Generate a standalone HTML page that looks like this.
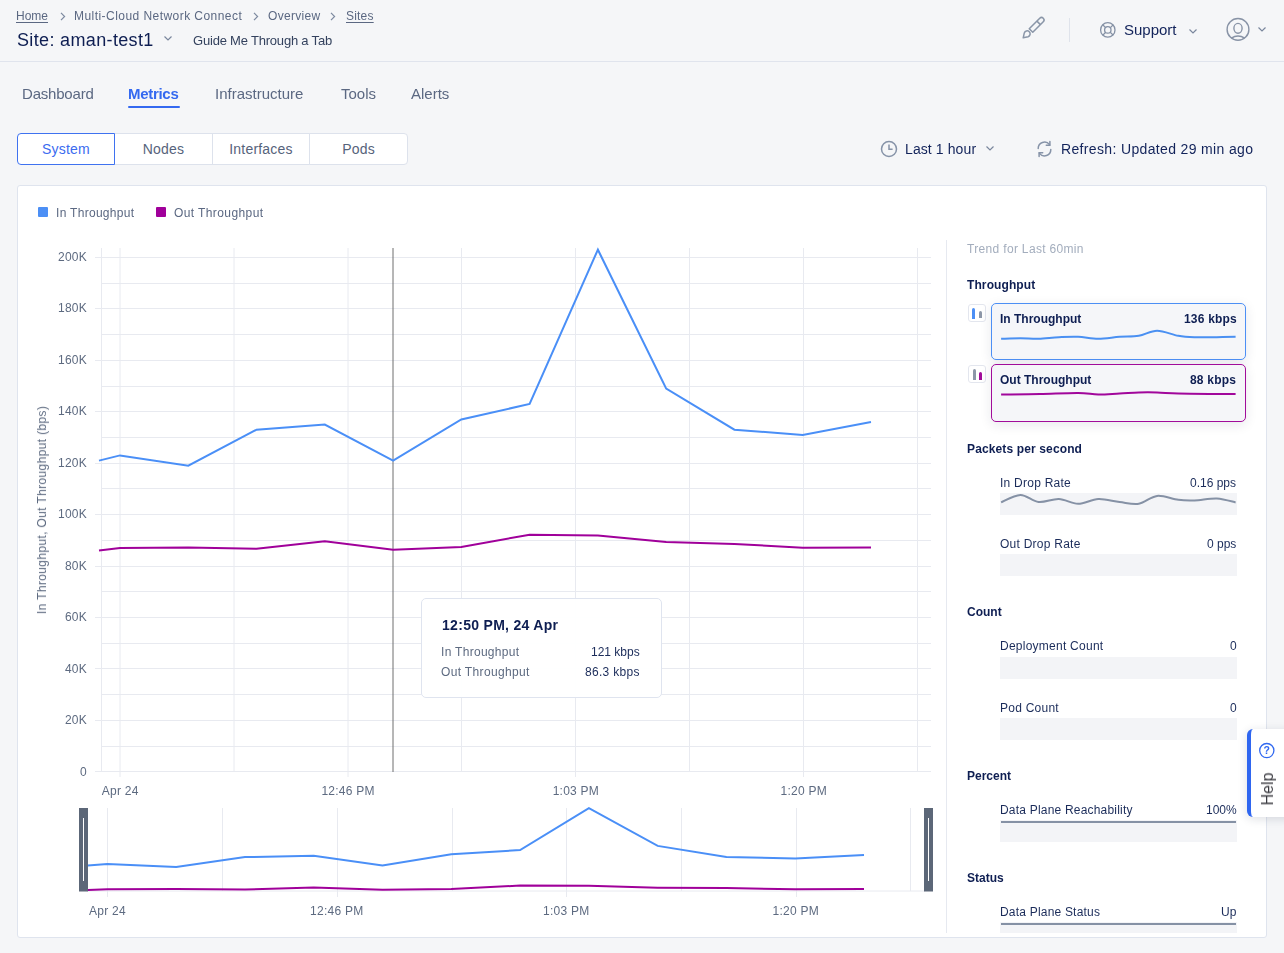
<!DOCTYPE html>
<html><head><meta charset="utf-8">
<style>
*{box-sizing:border-box;margin:0;padding:0}
html,body{width:1284px;height:953px;overflow:hidden;background:#f5f6f8;font-family:"Liberation Sans",sans-serif;color:#0e1e52}
.a{position:absolute;white-space:nowrap;will-change:transform}
.t12{font-size:12px;line-height:12px}
.t13{font-size:13px;line-height:13px}
.t14{font-size:14px;line-height:14px}
.t15{font-size:15px;line-height:15px}
.t18{font-size:18px;line-height:18px}
.bc{color:#5b6882}
.hdr{position:absolute;left:0;top:0;width:1284px;height:62px;border-bottom:1px solid #e0e4ed;background:#f5f6f8}
.tab{color:#5b6882}
.seg{position:absolute;top:133px;height:32px;background:#fff;border:1px solid #dde2ec;font-size:14px;line-height:30px;text-align:center;color:#56637b;letter-spacing:0.2px}
.card{position:absolute;left:17px;top:185px;width:1250px;height:753px;background:#fff;border:1px solid #dfe4ee;border-radius:3px}
</style></head>
<body>
<div class="hdr"></div>
<!-- breadcrumb -->
<div class="a t12 bc" style="left:16.4px;top:9.8px;text-decoration:underline;text-underline-offset:2px">Home</div>
<svg class="a" style="left:59px;top:11.5px" width="8" height="9" viewBox="0 0 8 9"><path d="M2 0.8 L5.6 4.5 L2 8.2" fill="none" stroke="#7d8aa0" stroke-width="1.2"/></svg>
<div class="a t12 bc" style="left:74.3px;top:9.8px;letter-spacing:0.45px">Multi-Cloud Network Connect</div>
<svg class="a" style="left:252px;top:11.5px" width="8" height="9" viewBox="0 0 8 9"><path d="M2 0.8 L5.6 4.5 L2 8.2" fill="none" stroke="#7d8aa0" stroke-width="1.2"/></svg>
<div class="a t12 bc" style="left:268px;top:9.8px;letter-spacing:0.3px">Overview</div>
<svg class="a" style="left:329px;top:11.5px" width="8" height="9" viewBox="0 0 8 9"><path d="M2 0.8 L5.6 4.5 L2 8.2" fill="none" stroke="#7d8aa0" stroke-width="1.2"/></svg>
<div class="a t12 bc" style="left:345.5px;top:9.8px;text-decoration:underline;text-underline-offset:2px;letter-spacing:0.2px">Sites</div>
<div class="a t18" id="title" style="left:16.6px;top:30.8px;color:#0e1e52;letter-spacing:0.35px">Site: aman-test1</div>
<svg class="a" style="left:162.8px;top:35px" width="10" height="7" viewBox="0 0 10 7"><path d="M1.5 1.5 L5 5 L8.5 1.5" fill="none" stroke="#7a879d" stroke-width="1.2"/></svg>
<div class="a t13" style="left:193px;top:34.3px;color:#34425e;letter-spacing:-0.2px">Guide Me Through a Tab</div>

<!-- header right -->
<svg class="a" style="left:1015px;top:10px" width="40" height="38" viewBox="0 0 40 38"><g fill="none" stroke="#8a96a8" stroke-width="1.5" stroke-linejoin="round"><path d="M14.23,18.73 L24.73,8.23 A2.5,2.5 0 0 1 28.27,11.77 L17.77,22.27 Z"/><path d="M21.9,11.1 L25.4,14.6"/><path d="M8.2,27.8 L9.3,22.9 A3,3 0 1 1 13.1,26.7 Z"/></g></svg>
<div class="a" style="left:1069px;top:18px;width:1px;height:24px;background:#dfe3eb"></div>
<svg class="a" style="left:1099px;top:21px" width="18" height="18" viewBox="0 0 18 18"><g fill="none" stroke="#8591a5" stroke-width="1.3"><circle cx="8.8" cy="8.9" r="7.2"/><circle cx="8.8" cy="8.9" r="3.2"/><path d="M3.7 3.7 L6.6 6.6 M14.3 3.7 L11.4 6.6 M3.7 14.3 L6.6 11.4 M14.3 14.3 L11.4 11.4"/></g></svg>
<div class="a t15" style="left:1124px;top:21.8px;color:#12235a">Support</div>
<svg class="a" style="left:1188px;top:28px" width="10" height="7" viewBox="0 0 10 7"><path d="M1.5 1.5 L5 5 L8.5 1.5" fill="none" stroke="#7a879d" stroke-width="1.2"/></svg>
<svg class="a" style="left:1225px;top:17px" width="26" height="26" viewBox="0 0 26 26"><g fill="none" stroke="#8893a6" stroke-width="1.4"><circle cx="13" cy="12.4" r="10.9"/><ellipse cx="13" cy="11.3" rx="4.1" ry="4.9"/><path d="M6.3 21.2 Q13 16.8 19.7 21.2"/></g></svg>
<svg class="a" style="left:1257px;top:26px" width="10" height="7" viewBox="0 0 10 7"><path d="M1.5 1.5 L5 5 L8.5 1.5" fill="none" stroke="#7a879d" stroke-width="1.2"/></svg>

<!-- tabs -->
<div class="a t15 tab" style="left:21.5px;top:85.6px;letter-spacing:-0.2px">Dashboard</div>
<div class="a t15" style="left:128px;top:85.6px;color:#3469f0;font-weight:bold;letter-spacing:-0.3px">Metrics</div>
<div class="a" style="left:128px;top:105.8px;width:52px;height:2.3px;background:#3469f0;border-radius:1px"></div>
<div class="a t15 tab" style="left:215px;top:85.6px">Infrastructure</div>
<div class="a t15 tab" style="left:340.5px;top:85.6px">Tools</div>
<div class="a t15 tab" style="left:410.5px;top:85.6px">Alerts</div>

<!-- segmented -->
<div class="seg" style="left:212px;width:98px">Interfaces</div>
<div class="seg" style="left:309px;width:99px;border-radius:0 4px 4px 0">Pods</div>
<div class="seg" style="left:114px;width:99px">Nodes</div>
<div class="seg" style="left:17px;width:98px;border:1px solid #3f72f0;color:#3b6cf0;border-radius:4px 0 0 4px;z-index:2">System</div>

<!-- toolbar right -->
<svg class="a" style="left:880px;top:140px" width="18" height="18" viewBox="0 0 18 18"><g fill="none" stroke="#8693a8" stroke-width="1.5"><circle cx="9" cy="9" r="7.5"/><path d="M9 4.5 V9.3 H12.6"/></g></svg>
<div class="a t14" style="left:905px;top:142.3px;color:#12235a;letter-spacing:0.1px">Last 1 hour</div>
<svg class="a" style="left:984.5px;top:145px" width="10" height="7" viewBox="0 0 10 7"><path d="M1.5 1.5 L5 5 L8.5 1.5" fill="none" stroke="#7a879d" stroke-width="1.2"/></svg>
<svg class="a" style="left:1036px;top:140px" width="17" height="18" viewBox="0 0 17 18"><g fill="none" stroke="#8693a8" stroke-width="1.5" stroke-linecap="round"><path d="M2.2 8.5 A6.3 6.3 0 0 1 13.5 4.6"/><path d="M14.8 9.5 A6.3 6.3 0 0 1 3.5 13.4"/><path d="M13.9 1.6 V5.2 H10.3"/><path d="M3.1 16.4 V12.8 H6.7"/></g></svg>
<div class="a t14" style="left:1061px;top:142.3px;color:#12235a;letter-spacing:0.35px">Refresh: Updated 29 min ago</div>

<!-- card -->
<div class="card"></div>
<svg class="a" style="left:0;top:0" width="1284" height="953" viewBox="0 0 1284 953" font-family="Liberation Sans, sans-serif" font-size="12" fill="#5d6a80" letter-spacing="0.25">
<line x1="95" y1="771.5" x2="931" y2="771.5" stroke="#e8eaf0" stroke-width="1"/>
<line x1="101.5" y1="746.5" x2="931" y2="746.5" stroke="#e8eaf0" stroke-width="1"/>
<line x1="95" y1="720.5" x2="931" y2="720.5" stroke="#e8eaf0" stroke-width="1"/>
<line x1="101.5" y1="694.5" x2="931" y2="694.5" stroke="#e8eaf0" stroke-width="1"/>
<line x1="95" y1="668.5" x2="931" y2="668.5" stroke="#e8eaf0" stroke-width="1"/>
<line x1="101.5" y1="643.5" x2="931" y2="643.5" stroke="#e8eaf0" stroke-width="1"/>
<line x1="95" y1="617.5" x2="931" y2="617.5" stroke="#e8eaf0" stroke-width="1"/>
<line x1="101.5" y1="591.5" x2="931" y2="591.5" stroke="#e8eaf0" stroke-width="1"/>
<line x1="95" y1="566.5" x2="931" y2="566.5" stroke="#e8eaf0" stroke-width="1"/>
<line x1="101.5" y1="540.5" x2="931" y2="540.5" stroke="#e8eaf0" stroke-width="1"/>
<line x1="95" y1="514.5" x2="931" y2="514.5" stroke="#e8eaf0" stroke-width="1"/>
<line x1="101.5" y1="488.5" x2="931" y2="488.5" stroke="#e8eaf0" stroke-width="1"/>
<line x1="95" y1="463.5" x2="931" y2="463.5" stroke="#e8eaf0" stroke-width="1"/>
<line x1="101.5" y1="437.5" x2="931" y2="437.5" stroke="#e8eaf0" stroke-width="1"/>
<line x1="95" y1="411.5" x2="931" y2="411.5" stroke="#e8eaf0" stroke-width="1"/>
<line x1="101.5" y1="386.5" x2="931" y2="386.5" stroke="#e8eaf0" stroke-width="1"/>
<line x1="95" y1="360.5" x2="931" y2="360.5" stroke="#e8eaf0" stroke-width="1"/>
<line x1="101.5" y1="334.5" x2="931" y2="334.5" stroke="#e8eaf0" stroke-width="1"/>
<line x1="95" y1="308.5" x2="931" y2="308.5" stroke="#e8eaf0" stroke-width="1"/>
<line x1="101.5" y1="283.5" x2="931" y2="283.5" stroke="#e8eaf0" stroke-width="1"/>
<line x1="95" y1="257.5" x2="931" y2="257.5" stroke="#e8eaf0" stroke-width="1"/>
<line x1="101.5" y1="248" x2="101.5" y2="772" stroke="#e8eaf0"/>
<line x1="120.0" y1="248" x2="120.0" y2="777" stroke="#e8eaf0"/>
<line x1="234.0" y1="248" x2="234.0" y2="772" stroke="#e8eaf0"/>
<line x1="348.0" y1="248" x2="348.0" y2="777" stroke="#e8eaf0"/>
<line x1="461.5" y1="248" x2="461.5" y2="772" stroke="#e8eaf0"/>
<line x1="575.5" y1="248" x2="575.5" y2="777" stroke="#e8eaf0"/>
<line x1="689.5" y1="248" x2="689.5" y2="772" stroke="#e8eaf0"/>
<line x1="803.5" y1="248" x2="803.5" y2="777" stroke="#e8eaf0"/>
<line x1="917.5" y1="248" x2="917.5" y2="772" stroke="#e8eaf0"/>
<text x="87" y="776.2" text-anchor="end">0</text>
<text x="87" y="724.0" text-anchor="end">20K</text>
<text x="87" y="672.5" text-anchor="end">40K</text>
<text x="87" y="621.1" text-anchor="end">60K</text>
<text x="87" y="569.6" text-anchor="end">80K</text>
<text x="87" y="518.2" text-anchor="end">100K</text>
<text x="87" y="466.8" text-anchor="end">120K</text>
<text x="87" y="415.3" text-anchor="end">140K</text>
<text x="87" y="363.9" text-anchor="end">160K</text>
<text x="87" y="312.4" text-anchor="end">180K</text>
<text x="87" y="261.0" text-anchor="end">200K</text>
<text x="120.3" y="795" text-anchor="middle">Apr 24</text>
<text x="348.1" y="795" text-anchor="middle">12:46 PM</text>
<text x="575.9" y="795" text-anchor="middle">1:03 PM</text>
<text x="803.7" y="795" text-anchor="middle">1:20 PM</text>
<line x1="393" y1="248" x2="393" y2="772" stroke="#6e6e6e" stroke-width="1"/>
<polyline points="99.0,460.6 120.0,455.4 188.3,465.7 256.5,429.7 324.8,424.6 393.1,460.6 461.3,419.4 529.6,404.0 597.9,249.7 666.2,388.6 734.4,429.7 802.7,434.9 871.0,422.0" fill="none" stroke="#4a8ff7" stroke-width="2" stroke-linejoin="miter"/>
<polyline points="99.0,550.4 120.0,548.0 188.3,547.5 256.5,548.8 324.8,541.3 393.1,549.8 461.3,547.0 529.6,534.7 597.9,535.4 666.2,542.1 734.4,543.9 802.7,547.8 871.0,547.5" fill="none" stroke="#a0009a" stroke-width="2" stroke-linejoin="miter"/>
<line x1="107.5" y1="808" x2="107.5" y2="897" stroke="#e8eaf0"/>
<line x1="222.5" y1="808" x2="222.5" y2="891" stroke="#e8eaf0"/>
<line x1="337.5" y1="808" x2="337.5" y2="897" stroke="#e8eaf0"/>
<line x1="452.5" y1="808" x2="452.5" y2="891" stroke="#e8eaf0"/>
<line x1="566.5" y1="808" x2="566.5" y2="897" stroke="#e8eaf0"/>
<line x1="681.5" y1="808" x2="681.5" y2="891" stroke="#e8eaf0"/>
<line x1="796.5" y1="808" x2="796.5" y2="897" stroke="#e8eaf0"/>
<line x1="910.5" y1="808" x2="910.5" y2="891" stroke="#e8eaf0"/>
<line x1="87" y1="891" x2="925" y2="891" stroke="#e8eaf0"/>
<polyline points="87.8,865.5 107.4,864.1 176.2,866.9 245.0,857.1 313.7,855.7 382.5,865.5 451.3,854.3 520.1,850.1 588.9,808.2 657.7,845.9 726.4,857.1 795.2,858.5 864.0,855.0" fill="none" stroke="#4a8ff7" stroke-width="2" stroke-linejoin="miter"/>
<polyline points="87.8,889.9 107.4,889.3 176.2,889.1 245.0,889.5 313.7,887.4 382.5,889.8 451.3,889.0 520.1,885.6 588.9,885.8 657.7,887.7 726.4,888.1 795.2,889.2 864.0,889.1" fill="none" stroke="#a0009a" stroke-width="2" stroke-linejoin="miter"/>
<text x="107.4" y="915" text-anchor="middle">Apr 24</text>
<text x="336.8" y="915" text-anchor="middle">12:46 PM</text>
<text x="566.3" y="915" text-anchor="middle">1:03 PM</text>
<text x="795.8" y="915" text-anchor="middle">1:20 PM</text>
<rect x="79" y="808" width="9" height="83.5" fill="#5c6778"/>
<line x1="83.5" y1="818" x2="83.5" y2="881" stroke="#fff" stroke-width="1"/>
<rect x="924" y="808" width="9" height="83.5" fill="#5c6778"/>
<line x1="928.5" y1="818" x2="928.5" y2="881" stroke="#fff" stroke-width="1"/>

</svg>

<!-- legend -->
<div class="a" style="left:38px;top:207px;width:10px;height:10px;background:#4c8ff5;border-radius:1px"></div>
<div class="a t12" style="left:55.6px;top:206.8px;color:#5b6882;letter-spacing:0.3px">In Throughput</div>
<div class="a" style="left:156px;top:207px;width:10px;height:10px;background:#a0009a;border-radius:1px"></div>
<div class="a t12" style="left:174px;top:206.8px;color:#5b6882;letter-spacing:0.4px">Out Throughput</div>
<!-- y axis title -->
<div class="a t12" style="left:42px;top:510px;color:#5d6a80;letter-spacing:0.36px;transform:translate(-50%,-50%) rotate(-90deg)">In Throughput, Out Throughput (bps)</div>

<!-- tooltip -->
<div class="a" style="left:420.5px;top:598px;width:241px;height:100px;background:rgba(255,255,255,0.96);border:1px solid #dfe4ef;border-radius:5px"></div>
<div class="a t14" style="left:441.5px;top:618.4px;font-weight:bold;color:#0e1e52;letter-spacing:0.3px">12:50 PM, 24 Apr</div>
<div class="a t12" style="left:440.7px;top:646px;color:#5d6a80;letter-spacing:0.3px">In Throughput</div>
<div class="a t12" style="left:440.9px;top:665.6px;color:#5d6a80;letter-spacing:0.35px">Out Throughput</div>
<div class="a t12" style="right:644.2px;top:646px;color:#1b2c5a;text-align:right">121 kbps</div>
<div class="a t12" style="right:643.8px;top:665.6px;color:#1b2c5a;letter-spacing:0.3px;text-align:right">86.3 kbps</div>

<!-- right panel -->
<div class="a" style="left:946px;top:240px;width:1px;height:693px;background:#e6e9f0"></div>
<div class="a t12" style="left:966.8px;top:242.9px;color:#a3adbd;letter-spacing:0.33px">Trend for Last 60min</div>
<div class="a t12" style="left:967px;top:279px;font-weight:bold;color:#0e1e52;letter-spacing:0.1px">Throughput</div>

<div class="a" style="left:968px;top:304px;width:18px;height:18px;border:1px solid #e3e6ee;border-radius:3px;background:#fff"></div>
<div class="a" style="left:972.4px;top:307.6px;width:3.4px;height:10.8px;background:#4c8ff5;border-radius:1.7px 1.7px 0 0"></div>
<div class="a" style="left:978.5px;top:311px;width:3.4px;height:7.4px;background:#8d97a8;border-radius:1.7px 1.7px 0 0"></div>
<div class="a" style="left:968px;top:365px;width:18px;height:18px;border:1px solid #e3e6ee;border-radius:3px;background:#fff"></div>
<div class="a" style="left:972.5px;top:368.5px;width:3.4px;height:11.2px;background:#8d97a8;border-radius:1.7px 1.7px 0 0"></div>
<div class="a" style="left:978.5px;top:371.8px;width:3.4px;height:7.9px;background:#a10c9a;border-radius:1.7px 1.7px 0 0"></div>

<div class="a" style="left:991px;top:303px;width:255px;height:57px;background:#f5f6f9;border:1px solid #4c8ff5;border-radius:5px;box-shadow:0 3px 12px rgba(30,40,70,0.10)"></div>
<div class="a" style="left:991px;top:364px;width:255px;height:58px;background:#f5f6f9;border:1px solid #a10c9a;border-radius:5px;box-shadow:0 3px 12px rgba(30,40,70,0.10)"></div>
<div class="a t12" style="left:1000.3px;top:312.7px;font-weight:bold;color:#0e1e52">In Throughput</div>
<div class="a t12" style="right:47.5px;top:312.7px;font-weight:bold;color:#0e1e52;letter-spacing:0.2px">136 kbps</div>
<div class="a t12" style="left:1000.3px;top:373.6px;font-weight:bold;color:#0e1e52">Out Throughput</div>
<div class="a t12" style="right:47.5px;top:373.6px;font-weight:bold;color:#0e1e52;letter-spacing:0.2px">88 kbps</div>

<div class="a t12" style="left:967.3px;top:443px;font-weight:bold;color:#0e1e52;letter-spacing:0.13px">Packets per second</div>
<div class="a t12" style="left:1000.4px;top:477px;color:#1b2c5a;letter-spacing:0.25px">In Drop Rate</div>
<div class="a t12" style="right:47.5px;top:477px;color:#1b2c5a">0.16 pps</div>
<div class="a" style="left:1000px;top:493px;width:237px;height:22px;background:#f3f4f7"></div>
<div class="a t12" style="left:1000.4px;top:538.2px;color:#1b2c5a;letter-spacing:0.25px">Out Drop Rate</div>
<div class="a t12" style="right:47.5px;top:538.2px;color:#1b2c5a">0 pps</div>
<div class="a" style="left:1000px;top:554px;width:237px;height:22px;background:#f3f4f7"></div>

<div class="a t12" style="left:967.3px;top:606px;font-weight:bold;color:#0e1e52">Count</div>
<div class="a t12" style="left:1000.4px;top:640.3px;color:#1b2c5a;letter-spacing:0.25px">Deployment Count</div>
<div class="a t12" style="right:47.5px;top:640.3px;color:#1b2c5a">0</div>
<div class="a" style="left:1000px;top:657px;width:237px;height:22px;background:#f3f4f7"></div>
<div class="a t12" style="left:1000.4px;top:701.9px;color:#1b2c5a;letter-spacing:0.25px">Pod Count</div>
<div class="a t12" style="right:47.5px;top:701.9px;color:#1b2c5a">0</div>
<div class="a" style="left:1000px;top:718px;width:237px;height:22px;background:#f3f4f7"></div>

<div class="a t12" style="left:967.3px;top:770px;font-weight:bold;color:#0e1e52">Percent</div>
<div class="a t12" style="left:1000.4px;top:803.9px;color:#1b2c5a;letter-spacing:0.2px">Data Plane Reachability</div>
<div class="a t12" style="right:47.5px;top:803.9px;color:#1b2c5a">100%</div>
<div class="a" style="left:1000px;top:820px;width:237px;height:22px;background:#f3f4f7"></div>
<div class="a" style="left:1001px;top:820.7px;width:235px;height:2px;background:#8591a5"></div>

<div class="a t12" style="left:967.3px;top:871.5px;font-weight:bold;color:#0e1e52">Status</div>
<div class="a t12" style="left:1000.4px;top:906px;color:#1b2c5a;letter-spacing:0.2px">Data Plane Status</div>
<div class="a t12" style="right:47.5px;top:906px;color:#1b2c5a">Up</div>
<div class="a" style="left:1000px;top:922px;width:237px;height:11px;background:#f3f4f7"></div>
<div class="a" style="left:1001px;top:923px;width:235px;height:2px;background:#8591a5"></div>

<svg class="a" style="left:0;top:0" width="1284" height="953" viewBox="0 0 1284 953">
<path d="M1001.1,338.8 C1004.3,338.7 1014.1,338.2 1020.4,338.2 C1026.6,338.2 1032.2,339.0 1038.6,338.8 C1045.0,338.6 1052.3,337.5 1058.9,337.2 C1065.5,336.9 1071.5,336.5 1078.1,336.8 C1084.7,337.1 1091.4,338.8 1098.3,338.8 C1105.2,338.8 1112.8,337.3 1119.6,336.8 C1126.3,336.3 1132.5,336.8 1138.8,335.8 C1145.0,334.8 1150.5,330.7 1157.1,330.7 C1163.7,330.7 1172.1,334.7 1178.3,335.8 C1184.5,336.9 1188.1,337.0 1194.5,337.2 C1200.9,337.4 1210.0,337.3 1216.8,337.2 C1223.6,337.1 1232.5,336.9 1235.6,336.8" fill="none" stroke="#4a90f2" stroke-width="2"/>
<path d="M1001.1,394.5 C1007.6,394.4 1027.2,394.3 1040.0,394.0 C1052.8,393.7 1068.4,392.8 1078.1,392.9 C1087.8,393.0 1091.4,394.4 1098.3,394.5 C1105.2,394.6 1112.8,393.8 1119.6,393.5 C1126.3,393.2 1132.5,392.7 1138.8,392.5 C1145.0,392.3 1150.5,392.3 1157.1,392.5 C1163.7,392.7 1168.3,393.2 1178.3,393.5 C1188.2,393.8 1207.2,393.9 1216.8,394.0 C1226.3,394.1 1232.5,393.9 1235.6,393.9" fill="none" stroke="#a1079b" stroke-width="2"/>
<path d="M1001.1,502.4 C1004.3,501.1 1014.1,495.0 1020.4,494.9 C1026.6,494.8 1032.2,501.3 1038.6,502.0 C1045.0,502.7 1052.3,498.7 1058.9,499.0 C1065.5,499.3 1071.5,503.8 1078.1,503.8 C1084.7,503.8 1091.4,499.3 1098.3,499.0 C1105.2,498.7 1112.8,501.2 1119.6,502.0 C1126.3,502.8 1132.5,504.8 1138.8,503.8 C1145.0,502.8 1150.5,496.6 1157.1,495.9 C1163.7,495.2 1172.1,499.1 1178.3,499.8 C1184.5,500.6 1188.1,500.6 1194.5,500.4 C1200.9,500.2 1210.0,498.1 1216.8,498.4 C1223.6,498.7 1232.5,501.7 1235.6,502.4" fill="none" stroke="#8591a5" stroke-width="2"/>

</svg>

<!-- help tab -->
<div class="a" style="left:1247px;top:729px;width:45px;height:88px;background:#fff;border-left:4px solid #2f66f0;border-radius:6px 0 0 6px;box-shadow:0 2px 10px rgba(30,40,70,0.15)"></div>
<svg class="a" style="left:1258px;top:742px" width="18" height="18" viewBox="0 0 18 18"><circle cx="8.8" cy="8.6" r="7.1" fill="none" stroke="#3068f0" stroke-width="1.3"/><text x="8.8" y="12.4" text-anchor="middle" font-family="Liberation Sans" font-weight="bold" font-size="10.5" fill="#3068f0">?</text></svg>
<div class="a" style="left:1267.5px;top:789px;font-size:16px;line-height:16px;color:#3a3a40;transform:translate(-50%,-50%) rotate(-90deg)">Help</div>


</body></html>
